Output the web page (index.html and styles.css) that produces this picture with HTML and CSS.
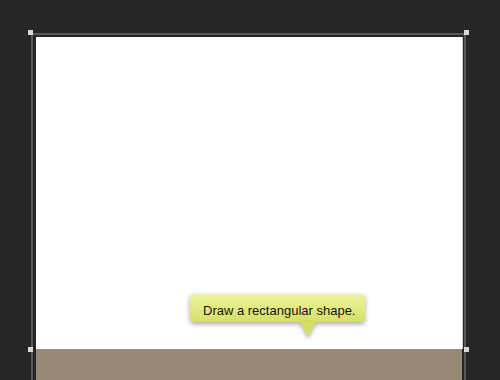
FILE: index.html
```html
<!DOCTYPE html>
<html>
<head>
<meta charset="utf-8">
<link rel="stylesheet" href="styles.css">
</head>
<body>
<div class="stage">
  <div class="frame">
    <div class="canvas">
      <div class="tooltip">
        <span class="tip-text">Draw a rectangular shape.</span>
        <span class="tip-arrow"></span>
      </div>
    </div>
    <div class="ground"></div>
    <span class="handle h-tl"></span>
    <span class="handle h-tr"></span>
    <span class="handle h-bl"></span>
    <span class="handle h-br"></span>
  </div>
</div>
</body>
</html>
```
FILE: styles.css
```css
html, body {
  margin: 0;
  padding: 0;
  background: #262626;
  width: 500px;
  height: 380px;
  overflow: hidden;
  font-family: "Liberation Sans", Arial, sans-serif;
}
.stage {
  padding: 33px 0 0 31px;
  height: 347px;
}
.frame {
  position: relative;
  width: 426px;
  height: 345px;
  border-top: 2px solid #585858;
  border-left: 2px solid #585858;
  border-right: 2px solid #585858;
  padding: 2px 2px 0 3px;
  display: flex;
  flex-direction: column;
}
.canvas {
  position: relative;
  height: 312px;
  background: #ffffff;
  box-shadow: 1px 0 0 #cfcfcf;
}
.ground {
  flex: 1;
  background: #988876;
}
.handle {
  position: absolute;
  width: 5px;
  height: 5px;
  background: #d6d6d6;
}
.h-tl { left: -5px; top: -5px; }
.h-tr { right: -5px; top: -5px; }
.h-bl { left: -5px; top: 312px; }
.h-br { right: -5px; top: 312px; }
.tooltip {
  position: absolute;
  left: 154px;
  top: 257px;
  width: 175px;
  height: 28px;
  box-sizing: border-box;
  padding: 9px 0 0 13px;
  border-radius: 4px;
  background: linear-gradient(#eef49c, #d6df68);
  box-shadow: 0 2px 5px rgba(0, 0, 0, 0.35);
}
.tip-text {
  display: block;
  font-size: 13px;
  line-height: 15px;
  color: #151515;
  white-space: nowrap;
}
.tip-arrow {
  position: absolute;
  left: 110px;
  top: 28px;
  width: 0;
  height: 0;
  border-left: 8px solid transparent;
  border-right: 8px solid transparent;
  border-top: 15px solid #d6df68;
  filter: drop-shadow(0 2px 2px rgba(0, 0, 0, 0.3));
}
```
